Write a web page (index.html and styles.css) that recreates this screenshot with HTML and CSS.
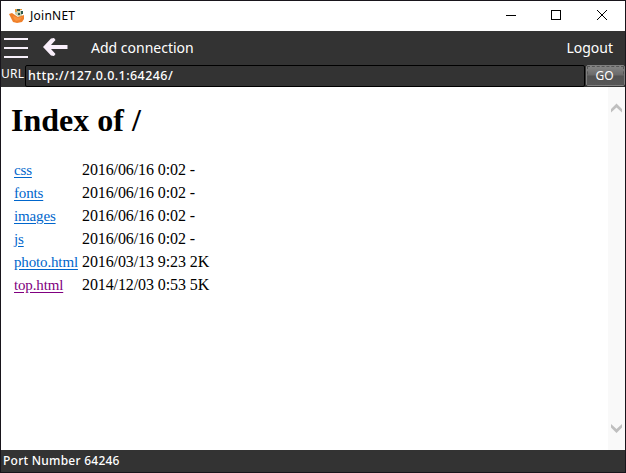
FILE: index.html
```html
<!DOCTYPE html>
<html lang="en">
<head>
<meta charset="utf-8">
<title>JoinNET</title>
<link rel="stylesheet" href="styles.css">
</head>
<body>
<div class="window">
  <header class="titlebar">
    <svg class="app-icon" width="16" height="16" viewBox="0 0 16 16">
      <path d="M6 3l4-1 3 1v5l-3 1-4-3z" fill="#c5cfae"/>
      <path d="M8 1h3v2H8zM12 3h2v3h-2zM9 5h2v2H9z" fill="#2f5a50"/>
      <path d="M6 1h2v3H6zM11 1h2v1h-2z" fill="#e89a3c"/>
      <path d="M0 6l3-1 3 2 3 2 6-2v4l-2 3-5 1-4-1-2-4z" fill="#f0802a"/>
      <path d="M4 8l3 1 2 1 4-1-2 3-4 1-2-2z" fill="#f99440"/>
    </svg>
    <span class="app-name">JoinNET</span>
    <svg class="controls" width="103" height="12" viewBox="0 0 103 12" shape-rendering="crispEdges" fill="none" stroke="#000">
      <path d="M0 6.500h10M45.500 1.500h9v9h-9z"/>
      <path d="M91 1l10 10M101 1L91 11" shape-rendering="auto"/>
    </svg>
  </header>
  <nav class="toolbar">
    <svg class="menu" width="24" height="22" viewBox="0 0 24 22"><path d="M0 2h24M0 11h24M0 20h24" stroke="#f7f0fa" stroke-width="2"/></svg>
    <svg class="back" width="25" height="20" viewBox="0 0 25 20"><path d="M0 10l8-8.500 3-.5 1.500 2L8 8h16.500v4H8l4.500 5-1.500 2-3-.5z" fill="#f9effb"/></svg>
    <span class="add">Add connection</span>
    <span class="logout">Logout</span>
  </nav>
  <div class="address">
    <span class="url-label">URL</span>
    <div class="field"><span class="url">http://127.0.0.1:64246/</span></div>
    <button class="go">GO</button>
  </div>
  <main class="view">
    <section class="page">
      <h1>Index of /</h1>
      <table>
        <tr><td><a href="#">css</a></td><td>2016/06/16 0:02 -</td></tr>
        <tr><td><a href="#">fonts</a></td><td>2016/06/16 0:02 -</td></tr>
        <tr><td><a href="#">images</a></td><td>2016/06/16 0:02 -</td></tr>
        <tr><td><a href="#">js</a></td><td>2016/06/16 0:02 -</td></tr>
        <tr><td><a href="#">photo.html</a></td><td>2016/03/13 9:23 2K</td></tr>
        <tr><td><a class="visited" href="#">top.html</a></td><td>2014/12/03 0:53 5K</td></tr>
      </table>
    </section>
    <div class="scrollbar">
      <svg width="11" height="10" viewBox="0 0 11 10"><path d="M0 6l5.500-5.500L11 6v3.500L5.500 4.500 0 9.500z" fill="#bfbfbf"/></svg>
      <svg width="11" height="10" viewBox="0 0 11 10"><path d="M0 3.500L5.500 9 11 3.500V0L5.500 5 0 0z" fill="#bfbfbf"/></svg>
    </div>
  </main>
  <footer class="status"><span class="port">Port Number 64246</span></footer>
</div>
</body>
</html>
```
FILE: styles.css
```css
* { box-sizing: border-box; }
body { margin: 0; font-family: "Noto Sans", sans-serif; overflow: hidden; }
.window {
  width: 626px; height: 473px;
  border: 1px solid #18151b;
  background: #333;
  display: flex; flex-direction: column;
}
.titlebar {
  height: 30px; background: #fff;
  display: flex; align-items: center;
  padding: 0 16px 0 8px;
}
.app-icon { margin-top: -1px; }
.app-name { margin-left: 5px; font-size: 12px; letter-spacing: .25px; line-height: 16px; margin-top: -1px; color: #000; }
.controls { margin-left: auto; margin-top: -2px; }
.toolbar {
  height: 34px; color: #fff; font-size: 14px; line-height: 18px;
  display: flex; align-items: center;
  padding: 0 12px 0 3px;
}
.back { margin: -2px 0 0 15px; }
.add { margin-left: 23px; }
.logout { margin-left: auto; }
.address { height: 22px; display: flex; color: #fff; }
.url-label { width: 24px; font-size: 12px; letter-spacing: .2px; line-height: 17px; white-space: nowrap; }
.field {
  flex: 1; height: 22px;
  border: 1px solid #000; border-radius: 2px;
  padding-left: 2px;
  font-size: 12.5px; font-weight: 500; letter-spacing: .43px; line-height: 19px;
}
.go {
  width: 39px; height: 21px; margin-left: 1px; padding: 0 2px 0 0;
  border: 1px solid #808080; border-radius: 2px;
  outline: 1px dashed #555; outline-offset: -2px;
  background: linear-gradient(#858585, #6a6a6a 48%, #525252 52%, #575757);
  color: #fff; font: 12px/18px "Noto Sans", sans-serif;
}
.view { height: 363px; background: #fff; display: flex; }
.page { flex: 1; padding: 15px 0 0 10px; font-family: "Liberation Serif", serif; color: #000; }
h1 { margin: 0 0 18px; font-size: 32px; line-height: 37px; }
table { border-spacing: 2px; font-size: 16px; letter-spacing: -.1px; line-height: 19px; white-space: nowrap; }
td { padding: 1px; height: 21px; vertical-align: baseline; }
td:first-child { width: 66px; }
a { color: #0066cc; font-size: 15px; line-height: 15px; letter-spacing: -.15px; text-underline-offset: 2px; }
.visited { color: #800080; }
.scrollbar {
  width: 17px; background: #f9f9f9;
  display: flex; flex-direction: column; justify-content: space-between; align-items: center;
  padding: 16px 0;
}
.status { height: 22px; padding-left: 2px; color: #fff; font-size: 12px; font-weight: 500; letter-spacing: .25px; line-height: 21px; }
```
